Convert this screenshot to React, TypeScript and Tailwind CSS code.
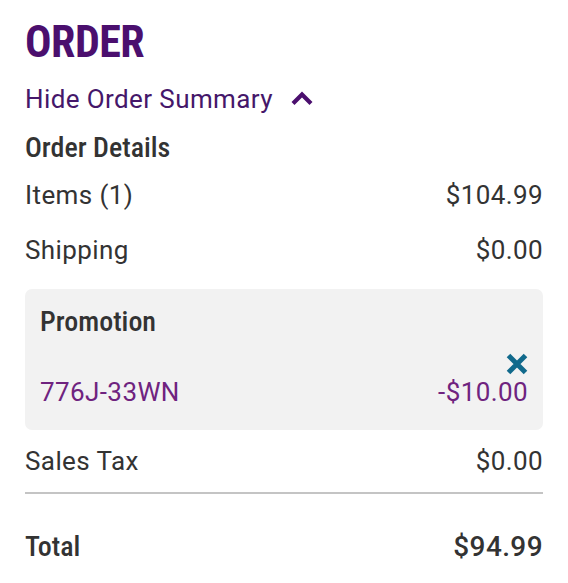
const body = "font-['Roboto','Liberation_Sans',sans-serif] tracking-[0.4px]";
const cond = "font-['Roboto_Condensed','Liberation_Sans_Narrow',Roboto,sans-serif]";

function Row({ label, value }: { label: string; value: string }) {
  return (
    <div className={`flex items-center justify-between h-[55px] text-[26px] text-[#333] ${body}`}>
      <span>{label}</span>
      <span>{value}</span>
    </div>
  );
}

export default function App() {
  return (
    <div className="w-[568px] h-[583px] bg-white px-[25px] pt-[14px]">
      <h1 className={`text-[44px] leading-[56px] font-bold text-[#4b0f6e] tracking-[-0.5px] ${cond}`}>ORDER</h1>
      <button className={`flex items-center gap-[17px] mt-[14px] text-[26px] leading-[30px] text-[#45176a] ${body}`}>
        Hide Order Summary
        <svg width="24" height="16" viewBox="0 0 24 16" className="mt-[-2px]">
          <path d="M3 13.5 L12 4.5 L21 13.5" fill="none" stroke="#4b0f6e" strokeWidth="4.2" />
        </svg>
      </button>
      <div className={`mt-[17px] text-[28px] leading-[34px] font-medium text-[#333] ${cond}`}>Order Details</div>
      <div className="mt-[3px]">
        <Row label="Items (1)" value="$104.99" />
        <Row label="Shipping" value="$0.00" />
      </div>

      <div className="mt-[11px] rounded-[7px] bg-[#f2f2f2] px-[15px] pt-[16px] pb-[23px]">
        <div className={`text-[28px] leading-[34px] font-medium text-[#333] ${cond}`}>Promotion</div>
        <div className="flex justify-end mt-[14px]">
          <svg width="22" height="22" viewBox="0 0 22 22">
            <path d="M2.5 2.5 L19.5 19.5 M19.5 2.5 L2.5 19.5" stroke="#116a8c" strokeWidth="5" />
          </svg>
        </div>
        <div className={`flex items-center justify-between mt-[2px] text-[26px] leading-[30px] text-[#6f237f] ${body}`}>
          <span>776J-33WN</span>
          <span>-$10.00</span>
        </div>
      </div>

      <div className="mt-[4px]">
        <Row label="Sales Tax" value="$0.00" />
      </div>
      <div className="h-[2px] bg-[#c4c4c4] mt-[3px]" />
      <div className={`flex items-center justify-between mt-[36px] text-[28px] leading-[34px] font-medium text-[#333] ${cond}`}>
        <span>Total</span>
        <span className={`font-medium ${body}`}>$94.99</span>
      </div>
    </div>
  );
}
